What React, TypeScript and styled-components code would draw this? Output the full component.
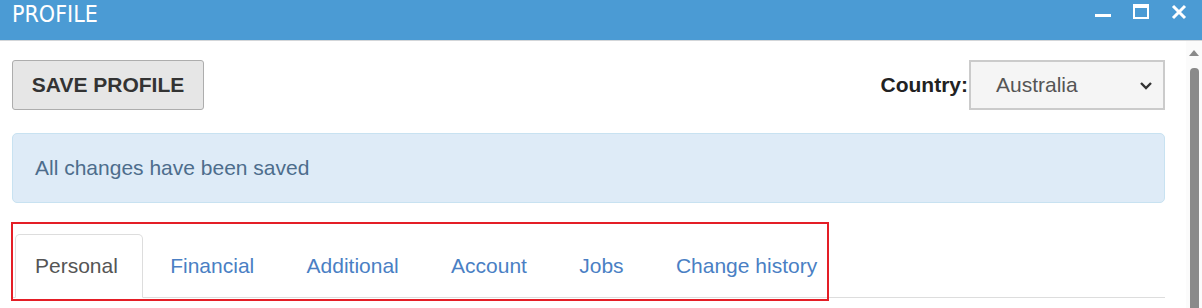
import React, { useState } from "react";
import styled, { createGlobalStyle } from "styled-components";

const GlobalStyle = createGlobalStyle`
  html, body {
    margin: 0;
    padding: 0;
    background: #ffffff;
    font-family: "Liberation Sans", Arial, sans-serif;
  }
`;

const tabs = ["Personal", "Financial", "Additional", "Account", "Jobs", "Change history"];

const App: React.FC = () => {
  const [active, setActive] = useState(0);

  return (
    <>
      <GlobalStyle />
      <Window>
        <TitleBar>
          <Title>PROFILE</Title>
          <WindowControls>
            <ControlButton aria-label="minimize">
              <svg width="18" height="18" viewBox="0 0 18 18">
                <rect x="1" y="12" width="16" height="3" fill="#fff" />
              </svg>
            </ControlButton>
            <ControlButton aria-label="maximize">
              <svg width="18" height="18" viewBox="0 0 18 18">
                <rect x="2" y="3" width="14" height="13" fill="none" stroke="#fff" strokeWidth="2" />
                <rect x="2" y="3" width="14" height="3" fill="#fff" />
              </svg>
            </ControlButton>
            <ControlButton aria-label="close">
              <svg width="18" height="18" viewBox="0 0 18 18">
                <path d="M3 4l12 12M15 4L3 16" stroke="#fff" strokeWidth="3" />
              </svg>
            </ControlButton>
          </WindowControls>
        </TitleBar>

        <Body>
          <Content>
            <TopRow>
              <SaveButton>SAVE PROFILE</SaveButton>
              <CountryField>
                <CountryLabel>Country:</CountryLabel>
                <SelectBox>
                  <span>Australia</span>
                  <svg width="14" height="9" viewBox="0 0 14 9">
                    <path d="M2 2l5 5 5-5" fill="none" stroke="#333" strokeWidth="2.4" />
                  </svg>
                </SelectBox>
              </CountryField>
            </TopRow>

            <Alert>All changes have been saved</Alert>

            <TabBar>
              <TabList>
                {tabs.map((t, i) => (
                  <Tab key={t} $active={i === active} onClick={() => setActive(i)}>
                    {t}
                  </Tab>
                ))}
              </TabList>
            </TabBar>
          </Content>

          <ScrollRail>
            <ScrollArrow />
            <ScrollThumb />
          </ScrollRail>
        </Body>
      </Window>
    </>
  );
};

export default App;

const Window = styled.div`
  width: 1202px;
  height: 308px;
  display: flex;
  flex-direction: column;
  overflow: hidden;
  background: #fff;
`;

const TitleBar = styled.div`
  height: 41px;
  flex-shrink: 0;
  box-sizing: border-box;
  background: #4b9bd4;
  border-bottom: 1px solid #d3d6d9;
  display: flex;
  align-items: flex-start;
  justify-content: space-between;
  padding: 0 12px;
`;

const Title = styled.div`
  font-family: "DejaVu Sans Condensed", "DejaVu Sans", sans-serif;
  font-stretch: condensed;
  font-size: 23px;
  line-height: 29px;
  color: #fff;
`;

const WindowControls = styled.div`
  display: flex;
  align-items: center;
  height: 22px;
  gap: 20px;
  margin-right: 2px;
`;

const ControlButton = styled.span`
  display: flex;
  width: 18px;
  height: 18px;
`;

const Body = styled.div`
  flex: 1;
  display: flex;
  min-height: 0;
`;

const Content = styled.div`
  flex: 1;
  padding: 19px 21px 0 12px;
`;

const TopRow = styled.div`
  display: flex;
  align-items: center;
  justify-content: space-between;
  height: 50px;
`;

const SaveButton = styled.button`
  height: 50px;
  width: 192px;
  padding: 0;
  background: #e6e6e6;
  border: 1px solid #adadad;
  border-radius: 3px;
  font-family: "Liberation Sans", Arial, sans-serif;
  font-weight: bold;
  font-size: 21px;
  color: #333;
  cursor: pointer;
`;

const CountryField = styled.div`
  display: flex;
  align-items: center;
  gap: 1px;
`;

const CountryLabel = styled.label`
  font-weight: bold;
  font-size: 21px;
  color: #222;
`;

const SelectBox = styled.div`
  width: 196px;
  height: 50px;
  box-sizing: border-box;
  border: 2px solid #cbcbcb;
  background: #f5f5f5;
  display: flex;
  align-items: center;
  justify-content: space-between;
  padding: 0 10px 0 25px;
  font-size: 21px;
  color: #555;
`;

const Alert = styled.div`
  margin-top: 23px;
  height: 70px;
  box-sizing: border-box;
  display: flex;
  align-items: center;
  padding: 0 22px;
  background: #deebf7;
  border: 1px solid #c8e2f1;
  border-radius: 5px;
  font-size: 21px;
  color: #4d6d8c;
`;

const TabBar = styled.div`
  margin-top: 22px;
  border-bottom: 1px solid #dddddd;
  display: flex;
`;

const TabList = styled.div`
  display: flex;
  align-items: flex-end;
  width: 811px;
  margin-left: 2px;
  margin-bottom: -1px;
  padding: 9px 0 0 1px;
  outline: 2px solid #e41e26;
  outline-offset: 1px;
  white-space: nowrap;
`;

const Tab = styled.div<{ $active?: boolean }>`
  height: 64px;
  box-sizing: border-box;
  display: flex;
  align-items: center;
  padding: 0 24px 0 19px;
  margin-right: 7.3px;
  font-size: 21px;
  cursor: pointer;
  border: 1px solid ${(p) => (p.$active ? "#dddddd" : "transparent")};
  border-bottom-color: transparent;
  border-radius: 5px 5px 0 0;
  background: ${(p) => (p.$active ? "#ffffff" : "transparent")};
  color: ${(p) => (p.$active ? "#555555" : "#4a7fc4")};
`;

const ScrollRail = styled.div`
  width: 16px;
  flex-shrink: 0;
  background: #fbfbfb;
  display: flex;
  flex-direction: column;
  align-items: center;
  padding-top: 9px;
  box-sizing: border-box;
`;

const ScrollArrow = styled.div`
  width: 0;
  height: 0;
  border-left: 5px solid transparent;
  border-right: 5px solid transparent;
  border-bottom: 6px solid #8a8a8a;
`;

const ScrollThumb = styled.div`
  margin-top: 12px;
  width: 9px;
  flex: 1;
  background: #8a8a8a;
  border-radius: 4px 4px 0 0;
`;
